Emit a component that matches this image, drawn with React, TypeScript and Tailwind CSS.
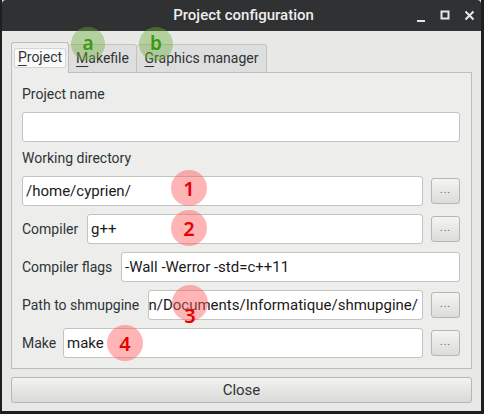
import React from "react";

const ui = { fontFamily: 'Roboto, "Noto Sans", sans-serif' };
const noto = { fontFamily: '"Noto Sans", "Open Sans", sans-serif' };

function Dots() {
  return (
    <button className="w-[29px] h-[26px] shrink-0 rounded-[3px] border border-[#b6b6b3] bg-gradient-to-b from-[#f4f4f3] to-[#dcdcda] flex items-center justify-center text-[10px] leading-none text-[#555] tracking-[1px] pb-[3px]">
      ...
    </button>
  );
}

function Input({ value, className = "", alignEnd = false }: { value: string; className?: string; alignEnd?: boolean }) {
  return (
    <div
      className={`h-full min-w-0 rounded-[3px] border border-[#c3c3c0] bg-white flex items-center overflow-hidden whitespace-nowrap text-[15px] text-[#1a1a1a] ${alignEnd ? "justify-end pr-[4px]" : "pl-[3px]"} ${className}`}
    >
      {value}
    </div>
  );
}

function Circle({ x, y, r, color }: { x: number; y: number; r: number; color: string }) {
  return (
    <div
      className={`absolute rounded-full ${color}`}
      style={{ left: x - r, top: y - r, width: r * 2, height: r * 2 }}
    />
  );
}

function Mark({ x, y, text, color, size }: { x: number; y: number; text: string; color: string; size: string }) {
  return (
    <div
      className={`absolute flex items-center justify-center w-[30px] h-[30px] leading-none font-semibold ${color} ${size}`}
      style={{ ...noto, left: x - 15, top: y - 15 }}
    >
      {text}
    </div>
  );
}

export default function App() {
  return (
    <div className="relative w-[484px] h-[414px] overflow-hidden bg-[#1e1f20]" style={ui}>
      <div className="flex flex-col h-[411px] ml-[2px] mr-[3px] bg-[#e8e8e7]">
        {/* Title bar */}
        <div className="h-[31px] shrink-0 bg-[#2f3132] rounded-t-[4px] relative flex items-center justify-center">
          <span className="text-[15px] font-medium text-[#eeeeec] ml-[4px]">Project configuration</span>
          <div className="absolute right-[6px] top-0 h-full flex items-center gap-[13px]">
            <svg width="11" height="11" viewBox="0 0 11 11" className="mt-[4px]">
              <rect x="1" y="8" width="8" height="2" fill="#e6e6e6" />
            </svg>
            <svg width="11" height="11" viewBox="0 0 11 11">
              <rect x="1.5" y="1.5" width="7" height="7" fill="none" stroke="#e6e6e6" strokeWidth="2" />
            </svg>
            <svg width="11" height="11" viewBox="0 0 11 11">
              <path d="M1.5 1.5 L9.5 9.5 M9.5 1.5 L1.5 9.5" stroke="#e6e6e6" strokeWidth="2" />
            </svg>
          </div>
        </div>

        {/* Content */}
        <div className="flex flex-col px-[9px] pt-[10px]">
          {/* Tabs */}
          <div className="flex items-end h-[31px] text-[14px] text-[#2e3436] whitespace-nowrap">
            <div className="h-[31px] w-[58px] rounded-t-[3px] border border-b-0 border-[#bdbdba] bg-[#ededec] flex items-center justify-center relative z-10 -mb-px pb-[1px]">
              <span className="px-[3px] h-[20px] flex items-center rounded-[2px] border border-[#d4d4d2] bg-[#fafafa]">
                <span className="underline underline-offset-[3px]">P</span>roject
              </span>
            </div>
            <div className="h-[28px] w-[68px] rounded-t-[3px] border border-b-0 border-l-0 border-[#c3c3c0] bg-[#dedede] flex items-center justify-center">
              <span><span className="underline underline-offset-[3px]">M</span>akefile</span>
            </div>
            <div className="h-[28px] w-[130px] rounded-t-[3px] border border-b-0 border-l-0 border-[#c3c3c0] bg-[#dedede] flex items-center justify-center">
              <span><span className="underline underline-offset-[3px]">G</span>raphics manager</span>
            </div>
          </div>

          {/* Panel */}
          <div className="h-[297px] border border-[#bdbdba] bg-[#ededec] flex flex-col pl-[10px] pr-[11px] pt-[11px] text-[14px] text-[#2e3436] whitespace-nowrap">
            <div className="h-[20px] flex items-center">Project name</div>
            <div className="h-[30px] mt-[8px] flex"><Input value="" className="flex-1" /></div>
            <div className="h-[20px] mt-[6px] flex items-center">Working directory</div>
            <div className="h-[30px] mt-[8px] flex items-center gap-[8px]">
              <Input value="/home/cyprien/" className="flex-1" />
              <Dots />
            </div>
            <div className="h-[30px] mt-[8px] flex items-center gap-[8px]">
              <span className="w-[57px] shrink-0">Compiler</span>
              <Input value="g++" className="flex-1" />
              <Dots />
            </div>
            <div className="h-[30px] mt-[8px] flex items-center gap-[8px]">
              <span className="w-[91px] shrink-0">Compiler flags</span>
              <Input value="-Wall -Werror -std=c++11" className="flex-1" />
            </div>
            <div className="h-[30px] mt-[8px] flex items-center gap-[8px]">
              <span className="w-[118px] shrink-0">Path to shmupgine</span>
              <Input value="/home/cyprien/Documents/Informatique/shmupgine/" className="flex-1" alignEnd />
              <Dots />
            </div>
            <div className="h-[30px] mt-[8px] flex items-center gap-[8px]">
              <span className="w-[33px] shrink-0">Make</span>
              <Input value="make" className="flex-1" />
              <Dots />
            </div>
          </div>

          {/* Close */}
          <button className="mt-[8px] h-[26px] rounded-[3px] border border-[#b6b6b3] bg-gradient-to-b from-[#f2f2f1] to-[#dadad8] text-[15px] text-[#2e3436] flex items-center justify-center">
            Close
          </button>
        </div>
      </div>

      {/* Annotations */}
      <Circle x={88} y={44} r={17} color="bg-[rgba(110,175,60,0.42)]" />
      <Circle x={156} y={44} r={17} color="bg-[rgba(110,175,60,0.42)]" />
      <Mark x={88} y={43} text="a" color="text-[#3c9a10]" size="text-[19px]" />
      <Mark x={156} y={43} text="b" color="text-[#3c9a10]" size="text-[19px]" />

      <Circle x={189} y={188} r={18} color="bg-[rgba(255,90,90,0.45)]" />
      <Circle x={189} y={228} r={18} color="bg-[rgba(255,90,90,0.45)]" />
      <Circle x={190} y={303} r={18} color="bg-[rgba(255,90,90,0.45)]" />
      <Circle x={125} y={343} r={18} color="bg-[rgba(255,90,90,0.45)]" />
      <Mark x={189} y={189} text="1" color="text-[#e60000]" size="text-[20px]" />
      <Mark x={189} y={229} text="2" color="text-[#e60000]" size="text-[20px]" />
      <Mark x={190} y={316} text="3" color="text-[#e60000]" size="text-[20px]" />
      <Mark x={125} y={344} text="4" color="text-[#e60000]" size="text-[20px]" />
    </div>
  );
}
